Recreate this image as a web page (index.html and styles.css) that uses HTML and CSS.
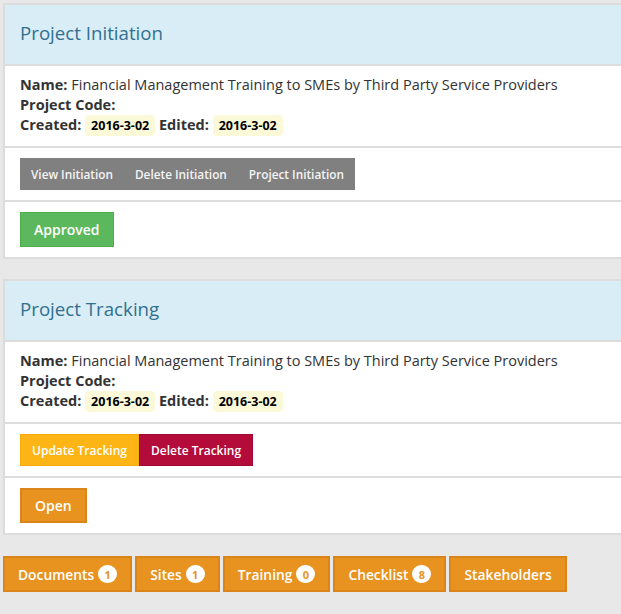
FILE: index.html
```html
<!DOCTYPE html>
<html lang="en">
<head>
<meta charset="utf-8">
<title>Projects</title>
<link rel="stylesheet" href="styles.css">
</head>
<body>
<div class="page">
  <section class="panel">
    <div class="panel-heading"><h3 class="panel-title">Project Initiation</h3></div>
    <div class="panel-body info">
      <div><b>Name:</b> Financial Management Training to SMEs by Third Party Service Providers</div>
      <div><b>Project Code:</b></div>
      <div><b>Created:</b> <code class="date">2016-3-02</code> <b>Edited:</b> <code class="date">2016-3-02</code></div>
    </div>
    <div class="panel-body">
      <div class="btn-group">
        <a class="btn btn-gray">View Initiation</a><a class="btn btn-gray">Delete Initiation</a><a class="btn btn-gray">Project Initiation</a>
      </div>
    </div>
    <div class="panel-body">
      <a class="btn btn-lg btn-success">Approved</a>
    </div>
  </section>

  <section class="panel">
    <div class="panel-heading"><h3 class="panel-title">Project Tracking</h3></div>
    <div class="panel-body info">
      <div><b>Name:</b> Financial Management Training to SMEs by Third Party Service Providers</div>
      <div><b>Project Code:</b></div>
      <div><b>Created:</b> <code class="date">2016-3-02</code> <b>Edited:</b> <code class="date">2016-3-02</code></div>
    </div>
    <div class="panel-body">
      <div class="btn-group">
        <a class="btn btn-amber">Update Tracking</a><a class="btn btn-crimson">Delete Tracking</a>
      </div>
    </div>
    <div class="panel-body">
      <a class="btn btn-lg btn-orange">Open</a>
    </div>
  </section>

  <nav class="tabs">
    <a class="btn btn-orange tab">Documents <span class="badge">1</span></a>
    <a class="btn btn-orange tab">Sites <span class="badge">1</span></a>
    <a class="btn btn-orange tab">Training <span class="badge">0</span></a>
    <a class="btn btn-orange tab">Checklist <span class="badge">8</span></a>
    <a class="btn btn-orange tab">Stakeholders</a>
  </nav>
</div>
</body>
</html>
```

FILE: styles.css
```css
html, body {
  margin: 0;
  padding: 0;
  background: #e8e8e8;
  overflow: hidden;
}
body {
  font-family: "Open Sans", "Liberation Sans", sans-serif;
  font-size: 14.5px;
  color: #333;
}
.page {
  padding: 3px 0 0 3px;
}
.panel {
  background: #fff;
  border: 2px solid #dcdcdc;
  margin: 0 -30px 20px 0;
}
.panel-heading {
  background: #d9edf7;
  height: 61px;
  padding: 0 15px 4px;
  box-sizing: border-box;
  display: flex;
  align-items: center;
  border-bottom: 2px solid #dcdcdc;
}
.panel-title {
  margin: 0;
  font-size: 18.7px;
  font-weight: 400;
  color: #31708f;
}
.panel-body {
  padding: 10px 15px;
  border-bottom: 2px solid #dcdcdc;
}
.panel-body:last-child {
  border-bottom: 0;
}
.info {
  line-height: 20px;
  padding-top: 9px;
  padding-bottom: 10px;
}
.info b {
  font-weight: 700;
}
.date {
  font-family: inherit;
  font-weight: 700;
  font-size: 12.5px;
  color: #000;
  background: #fbf9d8;
  border-radius: 4px;
  padding: 2px 6px;
}
.btn-group {
  display: flex;
}
.btn {
  display: inline-flex;
  align-items: center;
  justify-content: center;
  box-sizing: border-box;
  color: #fff;
  text-decoration: none;
  font-weight: 600;
  white-space: nowrap;
}
.btn-group .btn {
  height: 32px;
  padding: 0 11px;
  font-size: 12px;
}
.btn-group .btn-gray {
  font-size: 11.8px;
}
.btn-gray {
  background: #808080;
  color: #f4f4f4;
}
.btn-amber {
  background: #fdb515;
  border: 1px solid #f5ad0e;
}
.btn-crimson {
  background: #b30b3a;
  border: 1px solid #a30833;
}
.btn-lg {
  height: 35px;
  padding: 0 13px;
  font-size: 14px;
}
.btn-success {
  background: #5cb85c;
  border: 1px solid #4cae4c;
}
.btn-orange {
  background: #e8931f;
  border: 2px solid #d9851a;
}
.tabs {
  display: flex;
  gap: 3px;
  padding-top: 1px;
}
.tab {
  height: 36px;
  padding: 0 13px;
  font-size: 13.8px;
  font-weight: 600;
}
.badge {
  display: inline-flex;
  align-items: center;
  justify-content: center;
  margin-left: 4px;
  min-width: 19px;
  height: 18px;
  padding: 0 3px;
  box-sizing: border-box;
  border-radius: 9px;
  background: #fff;
  color: #e8931f;
  font-size: 11px;
  font-weight: 700;
}
```
